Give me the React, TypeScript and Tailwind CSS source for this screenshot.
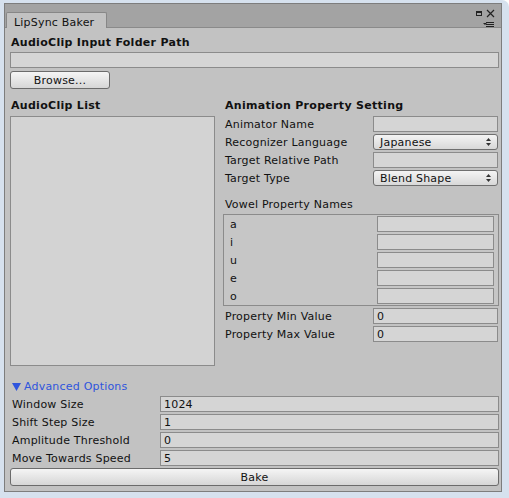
import React from 'react'

// Unity 风格的输入框
const Field = ({ value = '', className = '' }: { value?: string; className?: string }) => (
  <div
    className={`h-[16px] border border-[#8b8b8b] bg-[#d5d5d5] px-[3px] leading-[16px] text-[#111] overflow-hidden whitespace-nowrap ${className}`}
  >
    {value}
  </div>
)

const UpDownArrow = () => (
  <svg width="5" height="8" viewBox="0 0 5 8" className="shrink-0">
    <polygon points="0,3 2.5,0 5,3" fill="#333" />
    <polygon points="0,5 2.5,8 5,5" fill="#333" />
  </svg>
)

const Popup = ({ value }: { value: string }) => (
  <div className="h-[16px] flex-1 flex items-center justify-between rounded-[3px] border border-[#6f6f6f] bg-gradient-to-b from-[#f4f4f4] to-[#d8d8d8] pl-[6px] pr-[6px] text-[#111]">
    <span className="leading-[16px] pt-[1px]">{value}</span>
    <UpDownArrow />
  </div>
)

const Button = ({ label, className = '' }: { label: string; className?: string }) => (
  <div
    className={`h-[18px] flex items-center justify-center rounded-[3px] border border-[#6b6b6b] bg-gradient-to-b from-[#f5f5f5] to-[#d6d6d6] pt-[2px] text-[#111] ${className}`}
  >
    {label}
  </div>
)

const Row = ({
  label,
  labelClass,
  children
}: {
  label: string
  labelClass: string
  children: React.ReactNode
}) => (
  <div className="h-[18px] flex items-center">
    <div className={`shrink-0 whitespace-nowrap pt-[2px] ${labelClass}`}>{label}</div>
    {children}
  </div>
)

const vowels = ['a', 'i', 'u', 'e', 'o']

const advanced = [
  { label: 'Window Size', value: '1024' },
  { label: 'Shift Step Size', value: '1' },
  { label: 'Amplitude Threshold', value: '0' },
  { label: 'Move Towards Speed', value: '5' }
]

export default function App() {
  return (
    <div className="w-[509px] h-[498px] bg-[#d6e1ee] rounded-tr-[7px] pl-[4px] pt-[3px] pr-[7px] pb-[6px] font-['DejaVu_Sans',sans-serif] text-[11px] tracking-[0.2px] text-[#111] select-none">
      <div className="h-full flex flex-col border border-[#7d7d7d] bg-[#a3a3a3]">
        {/* タブバー */}
        <div className="relative h-[24px] shrink-0 flex items-end pl-[1px] border-b border-[#8a8a8a]">
          <div className="relative z-10 -mb-[1px] h-[16px] w-[101px] rounded-t-[2px] border border-b-0 border-[#878787] bg-[#c2c2c2] pl-[7px] pt-[3px] leading-[14px]">
            LipSync Baker
          </div>
          <svg width="30" height="24" viewBox="0 0 30 24" className="absolute left-[465px] top-0">
            <rect x="6.5" y="7.5" width="5" height="4" fill="none" stroke="#222" strokeWidth="1" />
            <rect x="6" y="7" width="6" height="2" fill="#222" />
            <path d="M17 6 L24 13 M24 6 L17 13" stroke="#222" strokeWidth="1.2" />
            <polygon points="13,19 17,19 15,21" fill="#222" />
            <rect x="16" y="18" width="8" height="1" fill="#222" />
            <rect x="16" y="20" width="8" height="1" fill="#222" />
            <rect x="16" y="22" width="8" height="1" fill="#222" />
          </svg>
        </div>

        {/* 本体 */}
        <div className="flex-1 flex flex-col bg-[#c2c2c2] pt-[1px] pl-[5px] pr-[2px]">
          <div className="mt-[4px] h-[18px] flex items-center pl-[1px] pt-[2px] font-bold tracking-[0.3px]">
            AudioClip Input Folder Path
          </div>
          <Field className="mt-[1px]" />
          <Button label="Browse..." className="mt-[3px] w-[100px]" />

          <div className="mt-[8px] flex">
            {/* 左カラム */}
            <div className="w-[205px] shrink-0 flex flex-col">
              <div className="h-[16px] flex items-center pl-[1px] pt-[2px] font-bold tracking-[0.3px]">AudioClip List</div>
              <div className="mt-[3px] h-[250px] border border-[#8b8b8b] bg-[#d3d3d3]" />
            </div>

            {/* 右カラム */}
            <div className="ml-[8px] pr-[1px] flex-1 flex flex-col">
              <div className="h-[16px] flex items-center pl-[2px] pt-[2px] font-bold tracking-[0.3px]">
                Animation Property Setting
              </div>
              <div className="mt-[2px]">
                <Row label="Animator Name" labelClass="w-[150px] pl-[2px]">
                  <Field className="flex-1" />
                </Row>
                <Row label="Recognizer Language" labelClass="w-[150px] pl-[2px]">
                  <Popup value="Japanese" />
                </Row>
                <Row label="Target Relative Path" labelClass="w-[150px] pl-[2px]">
                  <Field className="flex-1" />
                </Row>
                <Row label="Target Type" labelClass="w-[150px] pl-[2px]">
                  <Popup value="Blend Shape" />
                </Row>
              </div>
              <div className="mt-[8px] h-[18px] flex items-center pl-[2px] pt-[2px]">Vowel Property Names</div>
              <div className="mt-[1px] -mr-[1px] border border-[#8b8b8b] bg-[#c6c6c6]">
                {vowels.map(v => (
                  <div key={v} className="h-[18px] flex items-center pl-[6px] pr-[4px]">
                    <div className="flex-1 pt-[2px]">{v}</div>
                    <Field className="w-[117px]" />
                  </div>
                ))}
              </div>
              <div className="mt-[1px]">
                <Row label="Property Min Value" labelClass="w-[150px] pl-[2px]">
                  <Field value="0" className="flex-1" />
                </Row>
                <Row label="Property Max Value" labelClass="w-[150px] pl-[2px]">
                  <Field value="0" className="flex-1" />
                </Row>
              </div>
            </div>
          </div>

          {/* Advanced Options */}
          <div className="mt-[11px] h-[18px] flex items-center pl-[2px] pt-[2px] text-[#2f55dd]">
            <svg width="9" height="8" viewBox="0 0 9 8" className="mr-[3px]">
              <polygon points="0,0 9,0 4.5,8" fill="#2f55dd" />
            </svg>
            Advanced Options
          </div>
          {advanced.map(a => (
            <Row key={a.label} label={a.label} labelClass="w-[150px] pl-[2px]">
              <Field value={a.value} className="flex-1" />
            </Row>
          ))}
          <Button label="Bake" className="mt-[1px]" />
        </div>
      </div>
    </div>
  )
}
